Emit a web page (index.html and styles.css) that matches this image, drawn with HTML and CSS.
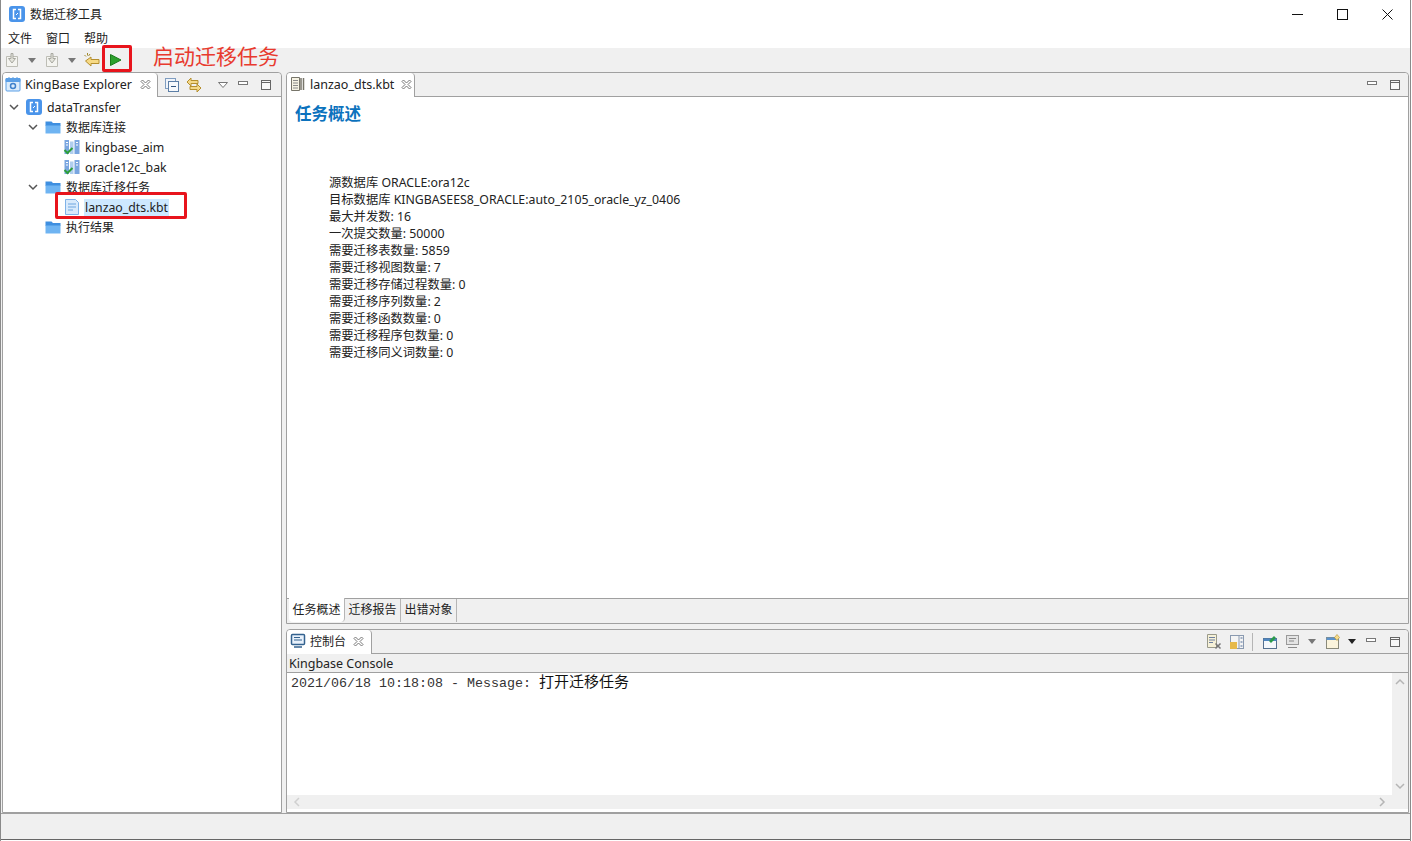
FILE: index.html
```html
<!DOCTYPE html>
<html lang="zh">
<head>
  <meta charset="UTF-8">
  <title>数据迁移工具</title>
  <link rel="stylesheet" href="styles.css">
</head>
<body>
  <svg class="defs" width="0" height="0">
    <symbol id="logo" viewBox="0 0 16 16">
      <rect x="0" y="0" width="16" height="16" rx="3" fill="#4a94ea"/>
      <path d="M7 3.500H4.500v9H7M9 3.500h2.500v9H9" fill="none" stroke="#fff" stroke-width="1.500"/>
      <path d="M7 9l2-2" fill="none" stroke="#fff"/>
    </symbol>
    <symbol id="folder" viewBox="0 0 16 16">
      <path d="M0.500 2.500h6l1.500 1.500h7.500v3H0.500z" fill="#3f8fe0"/>
      <path d="M0.500 6.500h15v8H0.500z" fill="#6fb4f2"/>
    </symbol>
    <symbol id="conn" viewBox="0 0 16 16">
      <rect x="0.500" y="1" width="4.500" height="14" fill="#7aa6e0"/>
      <rect x="6" y="2.500" width="3.500" height="12.500" fill="#b0ceee"/>
      <rect x="10.500" y="1" width="5" height="14" fill="#7aa6e0"/>
      <path d="M2 3.500h2M2 6h2M12 3.500h2M12 6h2" stroke="#fff"/>
      <path d="M0.500 11l3 3 5-5" fill="none" stroke="#2e9e3c" stroke-width="2"/>
    </symbol>
    <symbol id="doc-blue" viewBox="0 0 16 16">
      <path d="M1.500 0.500h10l3 3v12h-13z" fill="#d8eafc" stroke="#7fb2e8"/>
      <path d="M4 5h8M4 8h8M4 11h5" stroke="#6ea6e0"/>
    </symbol>
    <symbol id="doc-gray" viewBox="0 0 16 16">
      <path d="M1.500 1.500h8v13h-8z" fill="#f6f3e4" stroke="#77756a"/>
      <path d="M3 4.500h5M3 7h5M3 9.500h5M3 12h5" stroke="#8a8a8a"/>
      <path d="M11 2v12M13.500 2v12" stroke="#77756a" stroke-width="1.500"/>
    </symbol>
    <symbol id="close-x" viewBox="0 0 11 11">
      <path d="M1 2.500L2.500 1 5.500 4 8.500 1 10 2.500 7 5.500 10 8.500 8.500 10 5.500 7 2.500 10 1 8.500 4 5.500z" fill="#fff" stroke="#777" stroke-width="1"/>
    </symbol>
    <symbol id="min" viewBox="0 0 12 12">
      <rect x="1.500" y="2.500" width="9" height="3" fill="#fff" stroke="#777"/>
    </symbol>
    <symbol id="max" viewBox="0 0 12 12">
      <rect x="1.500" y="1.500" width="9" height="9" fill="#f8f8f8" stroke="#666"/>
      <path d="M1.500 3.500h9" stroke="#666"/>
    </symbol>
    <symbol id="chev" viewBox="0 0 12 12">
      <path d="M2 4l4 4 4-4" fill="none" stroke="#555" stroke-width="1.500"/>
    </symbol>
    <symbol id="caret" viewBox="0 0 8 5">
      <path d="M0 0h8L4 5z"/>
    </symbol>
    <symbol id="step" viewBox="0 0 16 16">
      <path d="M2.500 4.500h11v10h-11z" fill="#f4f4f0" stroke="#bdbdb5"/>
      <path d="M7 1.500v5H4.500L8 11l3.500-4.500H9v-5z" fill="#e4e4dc" stroke="#a8a8a0"/>
    </symbol>
  </svg>

  <div class="window">
    <header class="titlebar">
      <svg class="ico16"><use href="#logo"/></svg>
      <span class="title">数据迁移工具</span>
      <div class="winctl">
        <svg width="11" height="11" viewBox="0 0 11 11"><path d="M0 5.500h11" stroke="#111"/></svg>
        <svg width="11" height="11" viewBox="0 0 11 11"><rect x="0.500" y="0.500" width="10" height="10" fill="none" stroke="#111"/></svg>
        <svg width="11" height="11" viewBox="0 0 11 11"><path d="M0.500 0.500l10 10M10.500 0.500l-10 10" stroke="#111"/></svg>
      </div>
    </header>

    <nav class="menubar">
      <span>文件</span>
      <span>窗口</span>
      <span>帮助</span>
    </nav>

    <div class="toolbar">
      <svg class="ico16"><use href="#step"/></svg>
      <svg class="caret caret-off"><use href="#caret"/></svg>
      <svg class="ico16"><use href="#step"/></svg>
      <svg class="caret caret-off"><use href="#caret"/></svg>
      <svg class="ico16" viewBox="0 0 16 16">
        <path d="M0.500 3l1.500 1.500M3.500 1v2.500M6 2L4.500 4" stroke="#a08a30"/>
        <path d="M1.500 9L7 5v2.500h8v4H7V14z" fill="#f7da85" stroke="#b58f2e"/>
      </svg>
      <svg class="ico16" viewBox="0 0 16 16">
        <path d="M2.500 2.500L13 8 2.500 13.500z" fill="#2ca02c" stroke="#1a7a1a"/>
      </svg>
    </div>

    <main class="workbench">
      <section class="panel panel-left">
        <div class="tabbar">
          <div class="tab tab-explorer">
            <svg class="ico16" viewBox="0 0 16 16">
              <rect x="1" y="2.500" width="14" height="12.500" rx="1" fill="#dcecfb" stroke="#5b9fe6"/>
              <path d="M1 2.500h14v3H1zM4 1v2M8 1v2M12 1v2" fill="#5b9fe6" stroke="#5b9fe6"/>
              <circle cx="8" cy="10" r="2.500" fill="none" stroke="#3f82cc" stroke-width="1.500"/>
            </svg>
            <span>KingBase Explorer</span>
            <svg class="ico-close"><use href="#close-x"/></svg>
          </div>
          <div class="tab-tools">
            <svg class="ico16" viewBox="0 0 16 16">
              <rect x="1.500" y="1.500" width="10" height="10" fill="#f0f4fa" stroke="#7f9dc0"/>
              <rect x="4.500" y="4.500" width="10" height="10" fill="#f7f9fc" stroke="#5c7ea6"/>
              <path d="M7 9.500h5" stroke="#33557f"/>
            </svg>
            <svg class="ico16" viewBox="0 0 16 16">
              <path d="M1 5l4-4v2.500h7v3H5V9z" fill="#f5d98a" stroke="#b58f2e"/>
              <path d="M15 11l-4 4v-2.500H4v-3h7V7z" fill="#f5d98a" stroke="#b58f2e"/>
            </svg>
          </div>
          <div class="view-ctl explorer-ctl">
            <svg class="caret-view" viewBox="0 0 10 6"><path d="M0.500 0.500h9L5 5.500z" fill="#fff" stroke="#777"/></svg>
            <svg class="ico12"><use href="#min"/></svg>
            <svg class="ico12"><use href="#max"/></svg>
          </div>
        </div>

        <ul class="tree">
          <li class="node level-0">
            <svg class="ico12"><use href="#chev"/></svg>
            <svg class="ico16"><use href="#logo"/></svg>
            <span>dataTransfer</span>
          </li>
          <li class="node level-1">
            <svg class="ico12"><use href="#chev"/></svg>
            <svg class="ico16"><use href="#folder"/></svg>
            <span class="cjk">数据库连接</span>
          </li>
          <li class="node level-2">
            <svg class="ico16"><use href="#conn"/></svg>
            <span>kingbase_aim</span>
          </li>
          <li class="node level-2">
            <svg class="ico16"><use href="#conn"/></svg>
            <span>oracle12c_bak</span>
          </li>
          <li class="node level-1">
            <svg class="ico12"><use href="#chev"/></svg>
            <svg class="ico16"><use href="#folder"/></svg>
            <span class="cjk">数据库迁移任务</span>
          </li>
          <li class="node level-2">
            <svg class="ico16"><use href="#doc-blue"/></svg>
            <span class="selected">lanzao_dts.kbt</span>
          </li>
          <li class="node level-1 no-chev">
            <svg class="ico16"><use href="#folder"/></svg>
            <span class="cjk">执行结果</span>
          </li>
        </ul>
      </section>

      <div class="stack">
        <section class="panel panel-editor">
          <div class="tabbar">
            <div class="tab tab-editor">
              <svg class="ico16"><use href="#doc-gray"/></svg>
              <span>lanzao_dts.kbt</span>
              <svg class="ico-close"><use href="#close-x"/></svg>
            </div>
            <div class="view-ctl">
              <svg class="ico12"><use href="#min"/></svg>
              <svg class="ico12"><use href="#max"/></svg>
            </div>
          </div>
          <div class="overview">
            <h1>任务概述</h1>
            <ul class="facts">
              <li>源数据库 ORACLE:ora12c</li>
              <li>目标数据库 KINGBASEES8_ORACLE:auto_2105_oracle_yz_0406</li>
              <li>最大并发数: 16</li>
              <li>一次提交数量: 50000</li>
              <li>需要迁移表数量: 5859</li>
              <li>需要迁移视图数量: 7</li>
              <li>需要迁移存储过程数量: 0</li>
              <li>需要迁移序列数量: 2</li>
              <li>需要迁移函数数量: 0</li>
              <li>需要迁移程序包数量: 0</li>
              <li>需要迁移同义词数量: 0</li>
            </ul>
          </div>
          <div class="pagetabs">
            <span class="pagetab active">任务概述</span>
            <span class="pagetab">迁移报告</span>
            <span class="pagetab">出错对象</span>
          </div>
        </section>

        <section class="panel panel-console">
          <div class="tabbar">
            <div class="tab tab-console">
              <svg class="ico16" viewBox="0 0 16 16">
                <rect x="1.500" y="1.500" width="13" height="10" rx="1" fill="#e8f1fb" stroke="#33628f" stroke-width="1.500"/>
                <path d="M4 4.500h6M4 7h8" stroke="#33628f"/>
                <path d="M4 14h8" stroke="#33628f" stroke-width="1.500"/>
              </svg>
              <span>控制台</span>
              <svg class="ico-close"><use href="#close-x"/></svg>
            </div>
            <div class="view-ctl console-ctl">
              <svg class="ico16" viewBox="0 0 16 16">
                <path d="M1.500 0.500h9v13h-9z" fill="#f6f1d8" stroke="#9a9a8a"/>
                <path d="M3 3.500h6M3 6h6M3 8.500h4" stroke="#6d7fa0"/>
                <path d="M9.500 9.500l5 5M14.500 9.500l-5 5" stroke="#777" stroke-width="1.500"/>
              </svg>
              <svg class="ico16" viewBox="0 0 16 16">
                <rect x="1.500" y="1.500" width="13" height="13" fill="#f4f4f4" stroke="#8a9ab0"/>
                <path d="M10 1.500v13" stroke="#8a9ab0"/>
                <rect x="1" y="8" width="7" height="7" fill="#e6b94a"/>
                <path d="M11.500 4h2M11.500 8h2M11.500 12h2" stroke="#4c6a94"/>
              </svg>
              <i class="sep"></i>
              <svg class="ico16" viewBox="0 0 16 16">
                <rect x="1.500" y="4.500" width="13" height="10" fill="#f4f8fc" stroke="#54708f"/>
                <path d="M1.500 4.500h13v2.500h-13z" fill="#4f86c0"/>
                <path d="M7 7l5-5 2 2-5 5z" fill="#2a9a4a"/>
              </svg>
              <svg class="ico16" viewBox="0 0 16 16">
                <rect x="1.500" y="1.500" width="12" height="9" fill="#e4e4e4" stroke="#9a9a9a"/>
                <path d="M4 4.500h7M4 7h5M3 13.500h9" stroke="#8a8a8a"/>
              </svg>
              <svg class="caret caret-off"><use href="#caret"/></svg>
              <svg class="ico16 after-caret" viewBox="0 0 16 16">
                <rect x="1.500" y="3.500" width="12" height="11" fill="#fbf4dc" stroke="#8a8a7a"/>
                <path d="M1.500 3.500h12v2.500h-12z" fill="#5b92cc"/>
                <path d="M12 0.500l2.500 3-2.500 3-2.500-3z" fill="#f6dc8a" stroke="#b58f2e" stroke-width="0.600"/>
              </svg>
              <svg class="caret"><use href="#caret"/></svg>
              <svg class="ico12"><use href="#min"/></svg>
              <svg class="ico12"><use href="#max"/></svg>
            </div>
          </div>
          <div class="console-name">Kingbase Console</div>
          <div class="console-body">
            <div class="console-row">
              <div class="console-text"><span class="mono">2021/06/18 10:18:08 - Message: </span><span class="msg">打开迁移任务</span></div>
              <div class="vscroll">
                <svg class="ico12"><path d="M2 8l4-4 4 4" fill="none" stroke="#b5b5b5" stroke-width="1.500"/></svg>
                <svg class="ico12"><path d="M2 4l4 4 4-4" fill="none" stroke="#b5b5b5" stroke-width="1.500"/></svg>
              </div>
            </div>
            <div class="hscroll">
              <svg class="ico12"><path d="M8 2L4 6l4 4" fill="none" stroke="#d0d0d0" stroke-width="1.500"/></svg>
              <svg class="ico12"><path d="M4 2l4 4-4 4" fill="none" stroke="#b5b5b5" stroke-width="1.500"/></svg>
            </div>
          </div>
        </section>
      </div>
    </main>

    <footer class="statusbar"></footer>

    <div class="mark mark-play"></div>
    <div class="mark mark-file"></div>
    <div class="mark-label">启动迁移任务</div>
  </div>
</body>
</html>
```

FILE: styles.css
```css
* {
  box-sizing: border-box;
}
body {
  margin: 0;
  background: #fff;
  color: #222;
  font-family: "Noto Sans", "Noto Sans CJK SC", sans-serif;
  font-size: 12.3px;
  overflow: hidden;
}
ul {
  list-style: none;
  margin: 0;
  padding: 0;
}
svg {
  display: block;
  flex-shrink: 0;
}
.defs {
  position: absolute;
}
.ico16 {
  width: 16px;
  height: 16px;
}
.ico12 {
  width: 12px;
  height: 12px;
}
.ico-close {
  width: 11px;
  height: 11px;
}
.caret {
  width: 8px;
  height: 5px;
  fill: #222;
}
.caret-off {
  fill: #777;
}

.window {
  position: relative;
  height: 841px;
  display: flex;
  flex-direction: column;
  border-left: 1px solid #8a8a8a;
  border-right: 1px solid #8a8a8a;
  margin-right: 1px;
  padding-bottom: 1px;
}

.titlebar {
  height: 28px;
  display: flex;
  align-items: center;
  padding-left: 8px;
  gap: 5px;
}
.title {
  font-size: 12px;
}
.winctl {
  margin-left: auto;
  display: flex;
  gap: 34px;
  padding-right: 17px;
}

.menubar {
  height: 20px;
  display: flex;
  align-items: center;
  gap: 14px;
  padding-left: 7px;
  font-size: 12px;
}

.toolbar {
  height: 24px;
  background: #f0f0f0;
  display: flex;
  align-items: center;
  padding-left: 3px;
  gap: 8px;
}

.workbench {
  flex: 1;
  min-height: 0;
  background: #f0f0f0;
  display: flex;
  gap: 4px;
  padding-left: 1px;
  padding-right: 1px;
}
.panel {
  background: #fff;
  border: 1px solid #a0a0a0;
  border-radius: 4px 4px 0 0;
  display: flex;
  flex-direction: column;
}
.panel-left {
  width: 280px;
}
.stack {
  flex: 1;
  min-width: 0;
  display: flex;
  flex-direction: column;
  gap: 5px;
}
.panel-editor {
  height: 552px;
}
.panel-console {
  flex: 1;
  min-height: 0;
}

.tabbar {
  height: 24px;
  flex-shrink: 0;
  display: flex;
  align-items: center;
  background: #f0f0f0;
  border-bottom: 1px solid #a0a0a0;
  border-radius: 4px 4px 0 0;
}
.tab {
  height: 24px;
  background: #fff;
  border-right: 1px solid #a0a0a0;
  border-radius: 4px 4px 0 0;
  display: flex;
  align-items: center;
  gap: 4px;
  padding: 0 0 2px 2px;
  margin-bottom: -1px;
  font-size: 12.5px;
}
.tab-explorer {
  width: 155px;
}
.tab-explorer .ico-close {
  margin-left: 4px;
}
.tab-editor {
  width: 128px;
  padding-left: 3px;
}
.tab-editor .ico-close {
  margin-left: 3px;
}
.tab-console {
  width: 85px;
  padding-left: 3px;
}
.tab-console span {
  font-size: 12px;
}
.tab-console .ico-close {
  margin-left: 3px;
}
.tab-tools {
  display: flex;
  gap: 6px;
  padding-left: 6px;
}
.view-ctl {
  margin-left: auto;
  display: flex;
  align-items: center;
  gap: 11px;
  padding-right: 7px;
}
.explorer-ctl {
  padding-right: 9px;
}
.caret-view {
  width: 10px;
  height: 6px;
  margin-right: -2px;
}
.console-ctl {
  gap: 7px;
}
.console-ctl .ico12 {
  margin-left: 2px;
}
.console-ctl .ico12 + .ico12 {
  margin-left: 5px;
}
.after-caret {
  margin-left: 2px;
}
.sep {
  width: 1px;
  height: 18px;
  background: #b5b5b5;
  margin: 0 2px 0 0;
}

.node {
  height: 20px;
  display: flex;
  align-items: center;
}
.node span {
  margin-left: 5px;
}
.node .cjk {
  font-size: 12px;
}
.node .ico12 + .ico16 {
  margin-left: 6px;
}
.level-0 {
  padding-left: 5px;
}
.level-1 {
  padding-left: 24px;
}
.level-2 {
  padding-left: 61px;
}
.no-chev {
  padding-left: 42px;
}
.node .selected {
  background: #cde8ff;
  padding: 0 1px;
  margin-left: 4px;
}

.overview {
  flex: 1;
  min-height: 0;
  padding: 5px 0 0 8px;
}
.overview h1 {
  margin: 0;
  color: #0b72bd;
  font-size: 16.5px;
  font-weight: 700;
  line-height: 24px;
}
.facts {
  margin-top: 48px;
  padding-left: 34px;
  line-height: 17px;
  font-size: 12.3px;
}

.pagetabs {
  height: 25px;
  flex-shrink: 0;
  display: flex;
  background: #f0f0f0;
  border-top: 1px solid #a0a0a0;
  padding-left: 2px;
  font-size: 12px;
}
.pagetab {
  width: 56px;
  height: 23px;
  line-height: 22px;
  text-align: center;
  border-right: 1px solid #b5b5b5;
}
.pagetab.active {
  background: #fff;
  border-radius: 0 0 4px 4px;
  margin-top: -1px;
  height: 24px;
  line-height: 23px;
}

.console-name {
  height: 19px;
  flex-shrink: 0;
  background: #f0f0f0;
  border-bottom: 1px solid #a0a0a0;
  padding-left: 2px;
  line-height: 19px;
  font-size: 12.5px;
}
.console-body {
  flex: 1;
  min-height: 0;
  display: flex;
  flex-direction: column;
  padding-bottom: 3px;
}
.console-row {
  flex: 1;
  min-height: 0;
  display: flex;
}
.console-text {
  flex: 1;
  padding: 0 0 0 4px;
  line-height: 16px;
  color: #333;
}
.mono {
  font-family: "Liberation Mono", monospace;
  font-size: 13.33px;
  white-space: pre;
}
.msg {
  font-size: 15px;
  color: #111;
}
.vscroll {
  width: 16px;
  background: #f0f0f0;
  display: flex;
  flex-direction: column;
  justify-content: space-between;
  align-items: center;
  padding: 3px 0;
}
.hscroll {
  height: 14px;
  flex-shrink: 0;
  background: #f0f0f0;
  display: flex;
  justify-content: space-between;
  align-items: center;
  padding: 0 20px 0 4px;
}

.statusbar {
  height: 27px;
  flex-shrink: 0;
  background: #f0f0f0;
  border-top: 1px solid #a0a0a0;
  border-bottom: 1px solid #666;
}

.mark {
  position: absolute;
  border: 3px solid #e8141c;
  border-radius: 2px;
}
.mark-play {
  left: 101px;
  top: 45px;
  width: 30px;
  height: 27px;
}
.mark-file {
  left: 54px;
  top: 192px;
  width: 132px;
  height: 27px;
}
.mark-label {
  position: absolute;
  left: 152px;
  top: 41px;
  color: #e83a2e;
  font-size: 21px;
  line-height: 30px;
}
```
